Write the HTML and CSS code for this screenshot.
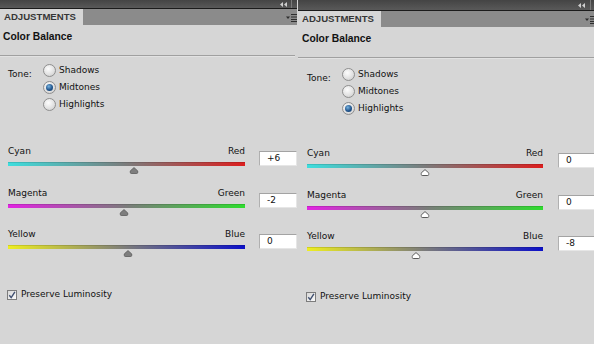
FILE: index.html
```html
<!DOCTYPE html>
<html lang="en">
<head>
<meta charset="utf-8">
<title>Adjustments - Color Balance</title>
<link rel="stylesheet" href="styles.css">
</head>
<body>
<div class="workspace">
  <section class="panel">
    <div class="topbar">
      <svg class="collapse" width="7" height="5" viewBox="0 0 7 5"><path d="M0 2.5 L3 0 L3 5 Z M4 2.5 L7 0 L7 5 Z" fill="#cfcfcf"/></svg>
      <span class="topbar-div"></span>
    </div>
    <div class="tabrow">
      <div class="tab">ADJUSTMENTS</div>
      <svg class="menu" width="11" height="8" viewBox="0 0 11 8"><path d="M0 2.5 H4 L2 5 Z" fill="#2e2e2e"/><path d="M5 0.5 H11 M5 3 H11 M5 5.5 H11 M5 7.5 H11" stroke="#2e2e2e" stroke-width="1"/></svg>
    </div>
    <h2 class="title">Color Balance</h2>
    <div class="sep"></div>
    <div class="tone">
      <span class="tone-label">Tone:</span>
      <div class="radios">
        <div class="radio-row"><span class="radio"></span><span>Shadows</span></div>
        <div class="radio-row"><span class="radio radio--on"></span><span>Midtones</span></div>
        <div class="radio-row"><span class="radio"></span><span>Highlights</span></div>
      </div>
    </div>
    <div class="sliders">
      <div class="slider-row">
        <div class="slider">
          <div class="slider-labels"><span>Cyan</span><span>Red</span></div>
          <div class="track track--cr">
            <svg class="thumb" style="left:53%" width="9" height="7" viewBox="0 0 9 7"><path d="M4.5 0.6 L8.3 4 C8.7 4.6 8.4 6.5 7.3 6.5 L1.7 6.5 C0.6 6.5 0.3 4.6 0.7 4 Z"/></svg>
          </div>
        </div>
        <div class="value">+6</div>
      </div>
      <div class="slider-row">
        <div class="slider">
          <div class="slider-labels"><span>Magenta</span><span>Green</span></div>
          <div class="track track--mg">
            <svg class="thumb" style="left:49%" width="9" height="7" viewBox="0 0 9 7"><path d="M4.5 0.6 L8.3 4 C8.7 4.6 8.4 6.5 7.3 6.5 L1.7 6.5 C0.6 6.5 0.3 4.6 0.7 4 Z"/></svg>
          </div>
        </div>
        <div class="value">-2</div>
      </div>
      <div class="slider-row">
        <div class="slider">
          <div class="slider-labels"><span>Yellow</span><span>Blue</span></div>
          <div class="track track--yb">
            <svg class="thumb" style="left:50.5%" width="9" height="7" viewBox="0 0 9 7"><path d="M4.5 0.6 L8.3 4 C8.7 4.6 8.4 6.5 7.3 6.5 L1.7 6.5 C0.6 6.5 0.3 4.6 0.7 4 Z"/></svg>
          </div>
        </div>
        <div class="value">0</div>
      </div>
    </div>
    <div class="preserve">
      <span class="checkbox"><svg width="8" height="8" viewBox="0 0 8 8"><path d="M1.3 4.2 L3.2 6.6 L6.9 0.8" fill="none" stroke="#3f4f70" stroke-width="1.4"/></svg></span>
      <span>Preserve Luminosity</span>
    </div>
  </section>

  <section class="panel panel--b">
    <div class="topbar">
      <svg class="collapse" width="7" height="5" viewBox="0 0 7 5"><path d="M0 2.5 L3 0 L3 5 Z M4 2.5 L7 0 L7 5 Z" fill="#cfcfcf"/></svg>
      <span class="topbar-div"></span>
    </div>
    <div class="tabrow">
      <div class="tab">ADJUSTMENTS</div>
      <svg class="menu" width="11" height="8" viewBox="0 0 11 8"><path d="M0 2.5 H4 L2 5 Z" fill="#2e2e2e"/><path d="M5 0.5 H11 M5 3 H11 M5 5.5 H11 M5 7.5 H11" stroke="#2e2e2e" stroke-width="1"/></svg>
    </div>
    <h2 class="title">Color Balance</h2>
    <div class="sep"></div>
    <div class="tone">
      <span class="tone-label">Tone:</span>
      <div class="radios">
        <div class="radio-row"><span class="radio"></span><span>Shadows</span></div>
        <div class="radio-row"><span class="radio"></span><span>Midtones</span></div>
        <div class="radio-row"><span class="radio radio--on"></span><span>Highlights</span></div>
      </div>
    </div>
    <div class="sliders">
      <div class="slider-row">
        <div class="slider">
          <div class="slider-labels"><span>Cyan</span><span>Red</span></div>
          <div class="track track--cr">
            <svg class="thumb thumb--hollow" style="left:50%" width="9" height="7" viewBox="0 0 9 7"><path d="M4.5 0.6 L8.3 4 C8.7 4.6 8.4 6.5 7.3 6.5 L1.7 6.5 C0.6 6.5 0.3 4.6 0.7 4 Z"/></svg>
          </div>
        </div>
        <div class="value">0</div>
      </div>
      <div class="slider-row">
        <div class="slider">
          <div class="slider-labels"><span>Magenta</span><span>Green</span></div>
          <div class="track track--mg">
            <svg class="thumb thumb--hollow" style="left:50%" width="9" height="7" viewBox="0 0 9 7"><path d="M4.5 0.6 L8.3 4 C8.7 4.6 8.4 6.5 7.3 6.5 L1.7 6.5 C0.6 6.5 0.3 4.6 0.7 4 Z"/></svg>
          </div>
        </div>
        <div class="value">0</div>
      </div>
      <div class="slider-row">
        <div class="slider">
          <div class="slider-labels"><span>Yellow</span><span>Blue</span></div>
          <div class="track track--yb">
            <svg class="thumb thumb--hollow" style="left:46%" width="9" height="7" viewBox="0 0 9 7"><path d="M4.5 0.6 L8.3 4 C8.7 4.6 8.4 6.5 7.3 6.5 L1.7 6.5 C0.6 6.5 0.3 4.6 0.7 4 Z"/></svg>
          </div>
        </div>
        <div class="value">-8</div>
      </div>
    </div>
    <div class="preserve">
      <span class="checkbox"><svg width="8" height="8" viewBox="0 0 8 8"><path d="M1.3 4.2 L3.2 6.6 L6.9 0.8" fill="none" stroke="#3f4f70" stroke-width="1.4"/></svg></span>
      <span>Preserve Luminosity</span>
    </div>
  </section>
</div>
</body>
</html>
```
FILE: styles.css
```css
* { box-sizing: border-box; margin: 0; padding: 0; }

html, body {
  width: 594px;
  height: 344px;
  overflow: hidden;
}

body {
  background: #d6d6d6;
  font-family: "DejaVu Sans", "Liberation Sans", sans-serif;
  font-size: 9px;
  color: #111;
}

.workspace {
  display: flex;
  gap: 1px;
  width: 600px;
  height: 344px;
}

.panel {
  width: 297px;
  flex: none;
  display: flex;
  flex-direction: column;
  background: #d6d6d6;
}
.panel--b { padding-left: 1px; width: 298px; }

/* dark title strip */
.topbar {
  height: 9px;
  flex: none;
  background: linear-gradient(#444444, #595959);
  border-bottom: 1px solid #1b1b1b;
  display: flex;
  justify-content: flex-end;
  align-items: center;
  gap: 4px;
  padding-right: 5px;
}
.panel--b .topbar { height: 11px; gap: 5px; margin-left: -1px; }

.topbar-div {
  width: 1px;
  align-self: stretch;
  background: #7a7a7a;
}

/* tab strip */
.tabrow {
  height: 16px;
  flex: none;
  background: #8b8b8b;
  display: flex;
  align-items: center;
  justify-content: space-between;
}
.panel--b .tabrow { margin-left: -1px; }

.tab {
  width: 83px;
  height: 16px;
  background: #d6d6d6;
  padding-left: 4px;
  font-family: "Liberation Sans", Arial, sans-serif;
  font-weight: bold;
  font-size: 9.6px;
  line-height: 16px;
  color: #363636;
}

.menu { display: block; margin-top: 1px; }

.title {
  margin: 6px 0 0 3px;
  font-family: "Liberation Sans", Arial, sans-serif;
  font-weight: bold;
  font-size: 10.3px;
  line-height: 12px;
  color: #111;
}

.sep {
  margin: 12px 2px 0 0;
  height: 1px;
  background: #a0a0a0;
  box-shadow: 0 1px 0 #e2e2e2;
}
.panel--b .sep { margin-left: -1px; }

/* tone */
.tone {
  display: flex;
  padding: 8px 0 0 8px;
  line-height: 13px;
}
.panel--b .tone { padding-top: 10px; }

.tone-label {
  width: 35px;
  margin-top: 4px;
}

.radios {
  display: flex;
  flex-direction: column;
}

.radio-row {
  height: 17px;
  display: flex;
  gap: 3px;
}

.radio {
  position: relative;
  width: 13px;
  height: 13px;
  border-radius: 50%;
  border: 1px solid #8f8f8f;
  background: radial-gradient(circle at 40% 35%, #fdfdfd 0%, #e2e2e2 55%, #c6c6c6 100%);
}

.radio--on::after {
  content: "";
  position: absolute;
  inset: 2px;
  border-radius: 50%;
  background: radial-gradient(circle at 40% 35%, #79b4e0 0%, #22568e 55%, #103763 100%);
}

/* sliders */
.sliders {
  display: flex;
  flex-direction: column;
  margin-top: 31px;
  padding-left: 8px;
}
.panel--b .sliders { margin-top: 29px; }

.slider-row {
  height: 41.5px;
  display: flex;
  gap: 14px;
}

.slider { width: 237px; }

.slider-labels {
  display: flex;
  justify-content: space-between;
  height: 11px;
  line-height: 11px;
}

.track {
  position: relative;
  margin-top: 5px;
  height: 4px;
  box-shadow: inset 0 1px 0 rgba(0, 0, 0, 0.12);
}
.track--cr { background: linear-gradient(90deg, #3ddede, #7b7b7b 50%, #dc1e1e); }
.track--mg { background: linear-gradient(90deg, #e224e2, #7b7b7b 50%, #2fdc2f); }
.track--yb { background: linear-gradient(90deg, #eeee22, #7b7b7b 50%, #0c10c8); }

.thumb {
  position: absolute;
  top: calc(100% + 1px);
  transform: translateX(-50%);
  display: block;
}
.thumb path { fill: #7e7e7e; stroke: #5c5c5c; stroke-width: 0.8; }
.thumb--hollow path { fill: #ffffff; stroke: #4a4a4a; stroke-width: 0.9; }

.value {
  width: 38px;
  height: 15px;
  margin-top: 5px;
  flex: none;
  background: #fff;
  border: 1px solid;
  border-color: #a3a3a3 #e6e6e6 #e6e6e6 #b0b0b0;
  padding-left: 7px;
  line-height: 13px;
  color: #111;
}
.panel--b .value { margin-left: 1px; }

/* preserve luminosity */
.preserve {
  display: flex;
  gap: 4px;
  margin-top: 18px;
  padding-left: 7px;
  line-height: 11px;
}

.checkbox {
  width: 10px;
  height: 10px;
  margin-top: 1px;
  border: 1px solid #7c7c7c;
  background: linear-gradient(135deg, #d8d8d8, #fbfbfb);
  display: flex;
  align-items: center;
  justify-content: center;
}
.checkbox svg { display: block; }
```
